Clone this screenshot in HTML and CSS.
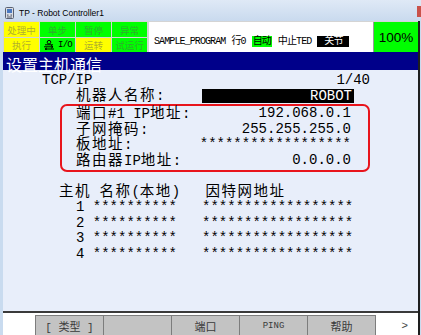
FILE: index.html
```html
<!DOCTYPE html>
<html lang="zh">
<head>
    <meta charset="UTF-8">
    <meta name="viewport" content="width=device-width, initial-scale=1.0">
    <title>TP - Robot Controller1</title>
    <link rel="stylesheet" href="styles.css">
</head>
<body>
    <div class="titlebar">
        <svg class="app-icon" width="9" height="12" viewBox="0 0 9 12">
            <rect x="0.5" y="0.5" width="8" height="11" rx="1" fill="#d8dce4" stroke="#5a6070"/>
            <rect x="2" y="2" width="5" height="4" fill="#4a78c0"/>
            <rect x="2" y="7.5" width="1.5" height="1.2" fill="#5a6070"/>
            <rect x="5.5" y="7.5" width="1.5" height="1.2" fill="#5a6070"/>
            <rect x="2" y="9.5" width="5" height="1" fill="#5a6070"/>
        </svg>
        <span>TP - Robot Controller1</span>
        <div class="close"></div>
    </div>

    <div class="screen">
        <div class="status">
            <div class="lamps">
                <div class="lamp yellow">处理中</div>
                <div class="lamp green">单步</div>
                <div class="lamp green">暂停</div>
                <div class="lamp green">异常</div>
                <div class="lamp yellow">执行</div>
                <div class="lamp green on">
                    <svg width="12" height="10" viewBox="0 0 12 10">
                        <circle cx="6" cy="2.2" r="1.8" fill="none" stroke="#000" stroke-width="1"/>
                        <path d="M2 4.8 H10" stroke="#000" stroke-width="1"/>
                        <path d="M1 6.8 H10 M8 5.3 L10 6.8 L8 8.3" fill="none" stroke="#000" stroke-width="1"/>
                        <path d="M11 9 H2 M4 7.8 L2 9 L4 10" fill="none" stroke="#000" stroke-width="1"/>
                    </svg>
                    <span class="io">I/O</span>
                </div>
                <div class="lamp yellow">运转</div>
                <div class="lamp green">试运行</div>
            </div>
            <div class="prog">
                <span>SAMPLE_PROGRAM</span>
                <span>行0</span>
                <span class="auto">自动</span>
                <span>中止TED</span>
                <span class="joint">关节</span>
            </div>
            <div class="ovr">100%</div>
        </div>

        <div class="header">设置主机通信</div>

        <div class="content">
            <div class="top-row"><span>TCP/IP</span><span>1/40</span></div>
            <div class="name-row">
                <span><span class="zh">机器人名称</span>:</span>
                <span class="robot">ROBOT</span>
            </div>

            <div class="netbox">
                <div class="net-row"><span><span class="zh">端口</span>#1 IP<span class="zh">地址</span>:</span><span>192.068.0.1</span></div>
                <div class="net-row"><span><span class="zh">子网掩码</span>:</span><span>255.255.255.0</span></div>
                <div class="net-row"><span><span class="zh">板地址</span>:</span><span>******************</span></div>
                <div class="net-row"><span><span class="zh">路由器</span>IP<span class="zh">地址</span>:</span><span>0.0.0.0</span></div>
            </div>

            <div class="hosts">
                <div class="host-head"><span class="zh">主机</span> <span class="zh">名称</span>(<span class="zh">本地</span>)   <span class="zh">因特网地址</span></div>
                <div class="host-row">1 **********   ******************</div>
                <div class="host-row">2 **********   ******************</div>
                <div class="host-row">3 **********   ******************</div>
                <div class="host-row">4 **********   ******************</div>
            </div>
        </div>

        <div class="fkeys">
            <div class="fkey">[ 类型 ]</div>
            <div class="fkey"></div>
            <div class="fkey">端口</div>
            <div class="fkey latin">PING</div>
            <div class="fkey">帮助</div>
            <div class="more">&gt;</div>
        </div>
    </div>
</body>
</html>
```

FILE: styles.css
```css
body {
    margin: 0;
    width: 421px;
    height: 335px;
    overflow: hidden;
    background: #c9dbef;
    font-family: "Liberation Mono", "Noto Sans CJK SC", monospace;
}

/* window title */
.titlebar {
    position: relative;
    height: 17px;
    padding: 4px 0 0 5px;
    display: flex;
    align-items: center;
    gap: 5px;
    background: linear-gradient(#dfe9f6, #c9daee);
    font: 8.5px "Liberation Sans", sans-serif;
    color: #000;
}
.close {
    position: absolute;
    right: 0;
    top: 6px;
    width: 4px;
    height: 11px;
    background: #c9524a;
}

.screen {
    margin-left: 3px;
    width: 415px;
    border-right: 2px solid #1e1e1e;
}

/* status panel */
.status {
    height: 31px;
    box-sizing: border-box;
    padding-top: 1px;
    display: flex;
    background: #d4d4d4;
}
.lamps {
    margin-left: 1px;
    display: grid;
    grid-template-columns: repeat(4, 35px);
    grid-template-rows: 15px 14px;
    gap: 1px;
}
.lamp {
    display: flex;
    align-items: center;
    justify-content: center;
    gap: 3px;
    font: 9.5px "Noto Sans CJK SC", sans-serif;
    color: rgba(90, 90, 90, 0.5);
}
.lamp.yellow {
    background: #ffff00;
}
.lamp.green {
    background: #00ff00;
}
.lamp.on {
    color: #000;
}
.io {
    font: 9px "Liberation Mono", monospace;
    letter-spacing: -0.8px;
}
.prog {
    flex: 1;
    margin-left: 2px;
    display: flex;
    align-items: flex-end;
    gap: 6px;
    padding: 0 0 5px 5px;
    background: #fff;
    font-size: 10px;
    line-height: 11px;
    letter-spacing: -0.9px;
}
.prog .auto {
    background: #00ff00;
    padding: 0 1px;
}
.prog .joint {
    background: #000;
    color: #fff;
    padding: 0 6px 0 7px;
}
.ovr {
    width: 44px;
    border-left: 1px solid #9a9a9a;
    display: flex;
    align-items: center;
    justify-content: center;
    background: #00ff00;
    font: 13.5px "Liberation Sans", sans-serif;
}

.header {
    height: 18px;
    line-height: 18px;
    padding-left: 3px;
    background: #00008a;
    color: #fff;
    font: 16px "Noto Sans CJK SC", sans-serif;
}

/* main screen */
.content {
    height: 243px;
    box-sizing: border-box;
    padding-top: 3px;
    background: #e8eefa;
    border-bottom: 2px solid #3a3a3a;
    font-size: 14px;
    line-height: 15px;
    color: #000;
}
.zh {
    font-family: "Noto Sans CJK SC", sans-serif;
    font-size: 14.5px;
    letter-spacing: 1.5px;
    line-height: 1;
}
.top-row,
.name-row,
.net-row {
    display: flex;
    align-items: center;
    white-space: pre;
}
.top-row {
    height: 15px;
    margin-left: 39px;
    width: 328px;
    justify-content: space-between;
}
.name-row {
    height: 15px;
    margin-left: 73px;
    width: 278px;
    justify-content: space-between;
}
.robot {
    width: 152px;
    height: 14px;
    line-height: 14px;
    box-sizing: border-box;
    padding-right: 2px;
    text-align: right;
    background: #000;
    color: #fff;
}
.netbox {
    margin: 1px 0 0 57px;
    width: 310px;
    box-sizing: border-box;
    border: 2px solid #e8141c;
    border-radius: 7px;
    padding: 0 17px 2px 14px;
}
.net-row {
    height: 15.5px;
    justify-content: space-between;
}
.hosts {
    margin-top: 11px;
}
.host-head,
.host-row {
    height: 15.5px;
    line-height: 15.5px;
    white-space: pre;
}
.host-head {
    margin: 0 0 1.5px 56px;
}
.host-row {
    margin-left: 73px;
}

/* function keys */
.fkeys {
    height: 22px;
    padding-left: 32px;
    display: flex;
    align-items: flex-end;
    background: #fff;
}
.fkey {
    width: 69px;
    height: 20px;
    box-sizing: border-box;
    margin-right: -1px;
    border: 1px solid #7d7d7d;
    border-bottom: none;
    background: #c3c3c3;
    display: flex;
    align-items: center;
    justify-content: center;
    font: 11px "Liberation Mono", "Noto Sans CJK SC", monospace;
    color: #3a3a3a;
    white-space: pre;
}
.fkey.latin {
    font: 9px "Liberation Mono", monospace;
}
.more {
    margin-left: auto;
    padding: 0 10px 4px 0;
    font: 11px "Liberation Sans", sans-serif;
    color: #444;
}
```
